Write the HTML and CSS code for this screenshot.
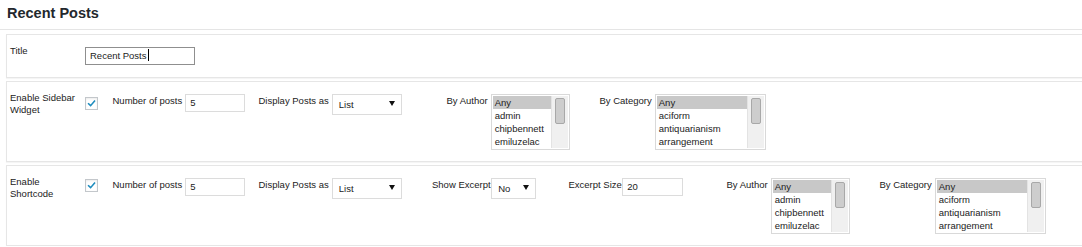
FILE: index.html
```html
<!DOCTYPE html>
<html lang="en">
<head>
<meta charset="utf-8">
<title>Recent Posts</title>
<link rel="stylesheet" href="styles.css">
</head>
<body>
<div class="page">
  <h2 class="page-title">Recent Posts</h2>

  <section class="card card--title">
    <div class="row">
      <div class="field-label">Title</div>
      <div class="text-input text-input--title is-focused">Recent Posts<span class="caret"></span></div>
    </div>
  </section>

  <section class="card">
    <div class="row">
      <div class="field-label">Enable Sidebar Widget</div>
      <span class="checkbox"><svg viewBox="0 0 11 11" width="11" height="11"><path d="M2.6 5.8 L4.6 7.7 L8.5 3.2" fill="none" stroke="#1e8cbe" stroke-width="1.6" stroke-linecap="square"/></svg></span>
      <div class="field field--num">
        <span class="field-text">Number of posts</span>
        <div class="text-input text-input--num">5</div>
      </div>
      <div class="field field--display">
        <span class="field-text">Display Posts as</span>
        <div class="select select--display"><span>List</span><svg class="select-arrow" viewBox="0 0 6 5" width="6" height="5"><polygon points="0,0 6,0 3,5" fill="#111"/></svg></div>
      </div>
      <div class="field field--author">
        <span class="field-text">By Author</span>
        <div class="listbox listbox--author">
          <div class="listbox-options">
            <div class="option is-selected">Any</div>
            <div class="option">admin</div>
            <div class="option">chipbennett</div>
            <div class="option">emiluzelac</div>
          </div>
          <div class="listbox-scroll"><div class="scroll-thumb"></div></div>
        </div>
      </div>
      <div class="field">
        <span class="field-text">By Category</span>
        <div class="listbox listbox--category">
          <div class="listbox-options">
            <div class="option is-selected">Any</div>
            <div class="option">aciform</div>
            <div class="option">antiquarianism</div>
            <div class="option">arrangement</div>
          </div>
          <div class="listbox-scroll"><div class="scroll-thumb"></div></div>
        </div>
      </div>
    </div>
  </section>

  <section class="card">
    <div class="row">
      <div class="field-label">Enable Shortcode</div>
      <span class="checkbox checkbox--tight"><svg viewBox="0 0 11 11" width="11" height="11"><path d="M2.6 5.8 L4.6 7.7 L8.5 3.2" fill="none" stroke="#1e8cbe" stroke-width="1.6" stroke-linecap="square"/></svg></span>
      <div class="field field--num">
        <span class="field-text">Number of posts</span>
        <div class="text-input text-input--num">5</div>
      </div>
      <div class="field field--display-narrow">
        <span class="field-text">Display Posts as</span>
        <div class="select select--display"><span>List</span><svg class="select-arrow" viewBox="0 0 6 5" width="6" height="5"><polygon points="0,0 6,0 3,5" fill="#111"/></svg></div>
      </div>
      <div class="field field--excerpt">
        <span class="field-text field-text--tight">Show Excerpt</span>
        <div class="select select--excerpt"><span>No</span><svg class="select-arrow" viewBox="0 0 6 5" width="6" height="5"><polygon points="0,0 6,0 3,5" fill="#111"/></svg></div>
      </div>
      <div class="field field--size">
        <span class="field-text field-text--tight">Excerpt Size</span>
        <div class="text-input text-input--size">20</div>
      </div>
      <div class="field field--author">
        <span class="field-text">By Author</span>
        <div class="listbox listbox--author">
          <div class="listbox-options">
            <div class="option is-selected">Any</div>
            <div class="option">admin</div>
            <div class="option">chipbennett</div>
            <div class="option">emiluzelac</div>
          </div>
          <div class="listbox-scroll"><div class="scroll-thumb"></div></div>
        </div>
      </div>
      <div class="field">
        <span class="field-text">By Category</span>
        <div class="listbox listbox--category">
          <div class="listbox-options">
            <div class="option is-selected">Any</div>
            <div class="option">aciform</div>
            <div class="option">antiquarianism</div>
            <div class="option">arrangement</div>
          </div>
          <div class="listbox-scroll"><div class="scroll-thumb"></div></div>
        </div>
      </div>
    </div>
  </section>
</div>
</body>
</html>
```

FILE: styles.css
```css
html, body {
  margin: 0;
  padding: 0;
  overflow: hidden;
  background: #fff;
}

body {
  font-family: "Liberation Sans", Arial, sans-serif;
  font-size: 9.5px;
  line-height: 11.5px;
  color: #222;
}

.page-title {
  margin: 0;
  padding: 4px 7px 7px;
  font-size: 14.5px;
  line-height: 18px;
  font-weight: bold;
  color: #23282d;
  border-bottom: 1px solid #e5e5e5;
}

.card {
  margin: 3px -40px 0 6px;
  padding: 12px 0 11px 3px;
  border: 1px solid #e6e6e6;
  box-shadow: 0 1px 1px rgba(0, 0, 0, 0.04);
  background: #fff;
}

.card--title {
  margin-top: 4px;
  padding-bottom: 12px;
}

.row {
  display: flex;
  align-items: flex-start;
}

.field-label {
  width: 70px;
  margin: -2px 5px 0 0;
  flex-shrink: 0;
}

.checkbox {
  box-sizing: border-box;
  width: 13px;
  height: 13px;
  margin: 3px 14.5px 0 0;
  border: 1px solid #c3c7cb;
  background: #fff;
  box-shadow: inset 0 1px 2px rgba(0, 0, 0, 0.08);
  display: flex;
  align-items: center;
  justify-content: center;
  flex-shrink: 0;
}

.checkbox--tight {
  margin-top: 1px;
}

.field {
  display: flex;
  align-items: flex-start;
  flex-shrink: 0;
}

.field--num { width: 146px; }
.field--display { width: 188px; }
.field--display-narrow { width: 173.5px; }
.field--excerpt { width: 136.5px; }
.field--size { width: 158px; }
.field--author { width: 153px; }

.field-text {
  margin: 1px 3px 0 0;
  white-space: nowrap;
}

.field-text--tight {
  margin-right: 0.5px;
}

.text-input {
  box-sizing: border-box;
  height: 18px;
  padding: 0 4px;
  line-height: 16px;
  border: 1px solid #dcdcdc;
  background: #fff;
  color: #222;
  white-space: nowrap;
}

.text-input--title {
  width: 110px;
  border-color: #8f8f8f;
}

.text-input--num { width: 60px; }
.text-input--size { width: 61px; }

.caret {
  display: inline-block;
  width: 1px;
  height: 12px;
  margin-left: 1px;
  background: #000;
  vertical-align: -2px;
}

.select {
  box-sizing: border-box;
  height: 21px;
  padding: 0 6px;
  border: 1px solid #dcdcdc;
  background: #fff;
  display: flex;
  align-items: center;
  justify-content: space-between;
}

.select--display { width: 70px; }
.select--excerpt { width: 45px; }

.select-arrow {
  display: block;
  margin-bottom: 2px;
}

.listbox {
  box-sizing: border-box;
  height: 56px;
  padding: 1px;
  border: 1px solid #d9d9d9;
  background: #fff;
  display: flex;
}

.listbox--author { width: 79px; }
.listbox--category { width: 111px; }

.listbox-options {
  flex: 1;
  min-width: 0;
}

.option {
  height: 13px;
  line-height: 13px;
  padding: 0 2px;
  white-space: nowrap;
  overflow: hidden;
}

.option.is-selected {
  background: #c8c8c8;
}

.listbox-scroll {
  box-sizing: border-box;
  width: 17px;
  padding: 2px 0 0 3px;
  background: #f0f0f0;
  border-left: 1px solid #e3e3e3;
  flex-shrink: 0;
}

.scroll-thumb {
  box-sizing: border-box;
  width: 10px;
  height: 26px;
  border: 1px solid #a8a8a8;
  border-radius: 2px;
  background: #cdcdcd;
}
```
